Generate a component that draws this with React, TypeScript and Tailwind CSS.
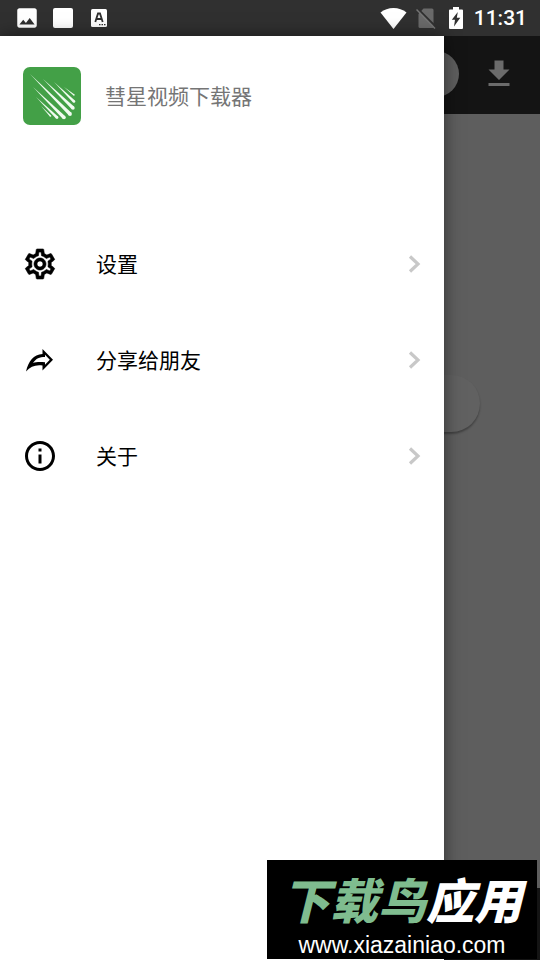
import type { ReactNode } from "react";
import { MdFileDownload, MdImage, MdInfoOutline, MdOutlineSettings } from "react-icons/md";

type MenuEntry = {
    label: string;
    icon: ReactNode;
};

// streaks of the comet logo: start point, end point, width at the head
const streaks = [
    [7, 7, 47, 47, 3.8],
    [20, 12, 50, 41, 3.4],
    [31, 15, 51, 34.5, 2.6],
    [41, 20, 51, 28, 1.4],
    [10, 20, 41, 50.5, 3.6],
    [13, 30, 34, 50.5, 2.8],
    [18, 39, 27.5, 49, 1.6],
];

function CometLogo() {
    return (
        <svg viewBox="0 0 58 58" className="size-[58px] shrink-0" aria-hidden="true">
            <rect width="58" height="58" rx="7" fill="#43a047" />
            {streaks.map(([x1, y1, x2, y2, w]) => {
                const d = w * 0.354;
                return (
                    <g key={`${x1}-${y1}`} fill="#f1fbf1">
                        <path d={`M${x1} ${y1}L${x2 + d} ${y2 - d}L${x2 - d} ${y2 + d}Z`} />
                        <circle cx={x2} cy={y2} r={w / 2} />
                    </g>
                );
            })}
        </svg>
    );
}

function ShareIcon() {
    return (
        <svg viewBox="0 0 36 36" className="size-9" aria-hidden="true">
            <path
                d="M4 29.500C6.500 19 11.500 12.500 20.500 12V7L31 17.800L20.500 28.500V23.500C13.500 22.500 8.500 24.500 4 29.500ZM11 21C13.500 20 17.500 19.700 23 20.200V22.800L27.800 17.800L23 12.700V15C17.500 15 14 16.500 11 21Z"
                fillRule="evenodd"
            />
        </svg>
    );
}

function ChevronIcon() {
    return (
        <svg viewBox="0 0 36 36" className="size-9" aria-hidden="true">
            <path d="M14 10.500L22 18L14 25.500" fill="none" stroke="#c8c8c8" strokeWidth="3.200" />
        </svg>
    );
}

function StatusBar() {
    return (
        <header className="flex h-9 shrink-0 items-center bg-[#303030] pl-3.5 pr-[13px] text-white">
            <MdImage className="size-[26px]" />
            <span className="ml-[13px] size-5 rounded-xs bg-white" />
            <svg viewBox="0 0 16 18" className="ml-[18px] h-[18px] w-4" aria-hidden="true">
                <rect width="16" height="18" rx="1.500" fill="#fff" />
                <path
                    d="M4.300 13L7 4.500H9L11.700 13M5.500 10H10.500"
                    fill="none"
                    stroke="#303030"
                    strokeWidth="1.800"
                />
                <path d="M8 15h1.500v1.300H8zM10.500 15H12v1.300h-1.500zM13 15h1.500v1.300H13z" fill="#303030" />
            </svg>
            <div className="ml-auto flex items-center">
                <svg viewBox="0 0 27 21" className="h-[21px] w-[27px]" aria-hidden="true">
                    <path d="M13.500 21L0.500 4.500Q6 0 13.500 0T26.500 4.500Z" fill="#fff" />
                </svg>
                <svg viewBox="0 0 20 21" className="ml-[9px] h-[21px] w-5" aria-hidden="true">
                    <path d="M7.500 0.500H16Q17.500 0.500 17.500 2V20H4Q2.500 20 2.500 18.500V6Z" fill="#6a6a6a" />
                    <path d="M1.500 0.500L20.500 19.500" stroke="#303030" strokeWidth="2" />
                    <path d="M0.500 1.500L19 20.500" stroke="#757575" strokeWidth="1.500" />
                </svg>
                <svg viewBox="0 0 14 22" className="ml-[13px] h-[22px] w-3.5" aria-hidden="true">
                    <path d="M4 0H10V2.500H13Q14 2.500 14 3.500V21Q14 22 13 22H1Q0 22 0 21V3.500Q0 2.500 1 2.500H4Z" fill="#fff" />
                    <path d="M8.800 5L2.800 12.800H6L5 19.500L11.300 10.800H7.800Z" fill="#303030" />
                </svg>
                <time className="ml-[11px] font-[Roboto,sans-serif] text-[21px] font-medium leading-6">11:31</time>
            </div>
        </header>
    );
}

const menu: MenuEntry[] = [
    {
        label: "设置",
        icon: <MdOutlineSettings className="size-9 [&>path:last-child]:stroke-black [&>path:last-child]:stroke-[0.4]" />,
    },
    { label: "分享给朋友", icon: <ShareIcon /> },
    { label: "关于", icon: <MdInfoOutline className="size-9" /> },
];

function Drawer() {
    return (
        <aside className="absolute inset-y-0 left-0 right-24 bg-white shadow-[0_0_16px_rgba(0,0,0,0.5)]">
            <div className="flex h-[180px] items-start gap-6 pl-[23px] pt-[31px]">
                <CometLogo />
                <h1 className="text-[21px] leading-14 text-[#757575]">彗星视频下载器</h1>
            </div>
            <nav>
                {menu.map((entry) => (
                    <button
                        key={entry.label}
                        type="button"
                        className="flex h-24 w-full items-center gap-[38px] pl-[22px] pr-3 text-left text-[21px] text-black"
                    >
                        {entry.icon}
                        <span className="flex-1">{entry.label}</span>
                        <ChevronIcon />
                    </button>
                ))}
            </nav>
        </aside>
    );
}

export default function App() {
    return (
        <div className="relative flex min-h-screen flex-col overflow-hidden font-['Noto_Sans_CJK_SC',sans-serif]">
            <StatusBar />
            <div className="relative flex flex-1 flex-col">
                {/* dimmed page under the drawer */}
                <main className="flex flex-1 flex-col bg-[#5e5e5e]">
                    <div className="flex h-[78px] items-center gap-[22px] bg-[#141414] pb-[3px] pl-6 pr-[23px]">
                        <div className="h-[46px] flex-1 rounded-full bg-[#5e5e5e]" />
                        <button type="button" aria-label="下载" className="text-[#6b6b6b]">
                            <MdFileDownload className="size-9" />
                        </button>
                    </div>
                    <div className="flex-1 px-[60px] pt-[261px]">
                        <div className="h-[57px] rounded-full bg-[#616161] shadow-[0_2px_2px_rgba(0,0,0,0.3)]" />
                    </div>
                    <div className="h-[72px] bg-[#141414]" />
                </main>
                <Drawer />
            </div>
            <footer className="absolute bottom-px right-[3px] flex h-[99px] w-[270px] flex-col items-center bg-black text-white">
                <p className="mt-1 whitespace-nowrap text-5xl font-black italic leading-[68px]">
                    <span className="text-[#7fbc8f]">下载鸟</span>应用
                </p>
                <a href="#" className="font-['Liberation_Sans',sans-serif] text-[23px] leading-[26px]">
                    www.xiazainiao.com
                </a>
            </footer>
        </div>
    );
}
